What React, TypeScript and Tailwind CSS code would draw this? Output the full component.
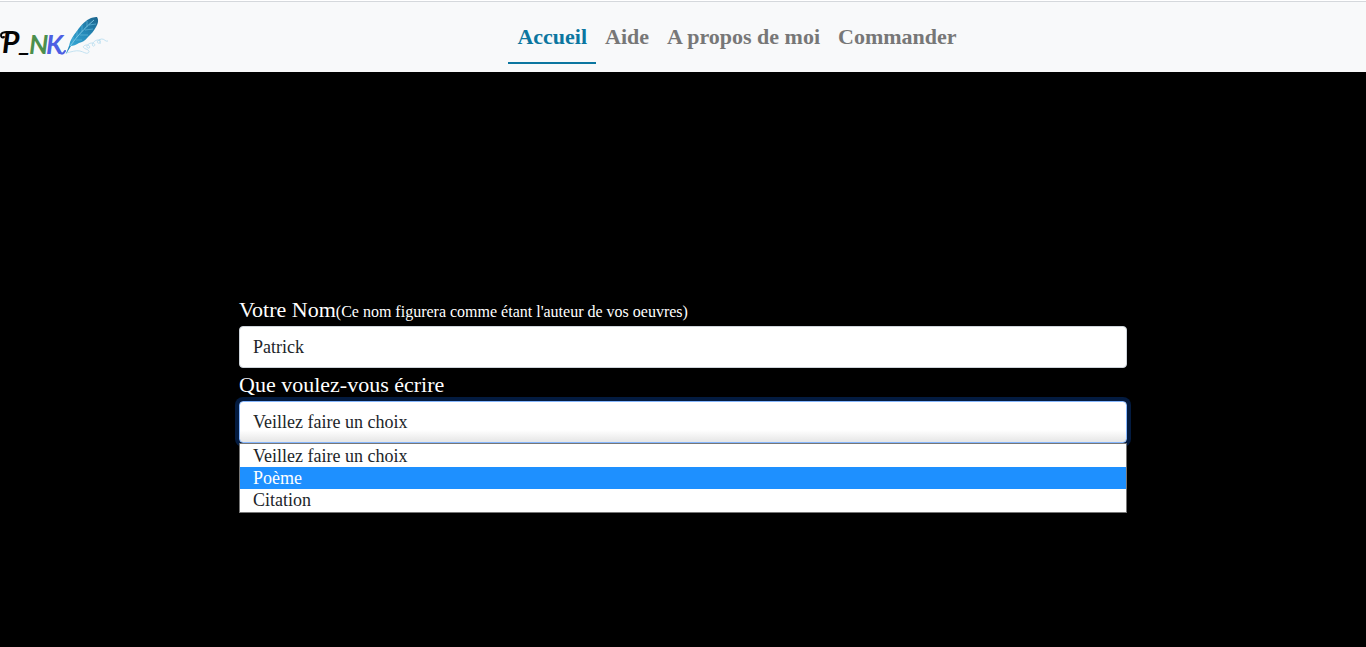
import { useState } from "react";

const links = ["Accueil", "Aide", "A propos de moi", "Commander"];
const choices = ["Veillez faire un choix", "Poème", "Citation"];

function Logo() {
  return (
    <svg width="108" height="44" viewBox="0 0 108 44" role="img" aria-label="P_NK" className="block overflow-visible">
      <defs>
        <linearGradient id="quill" x1="0" y1="1" x2="1" y2="0">
          <stop offset="0" stopColor="#39a9d6" />
          <stop offset="0.5" stopColor="#2489b8" />
          <stop offset="1" stopColor="#1c648c" />
        </linearGradient>
      </defs>
      <g fontFamily="Lato, sans-serif" fontStyle="italic" fontWeight="700">
        <text x="2" y="38" fill="#050505" fontSize="30">P</text>
        <text x="19" y="36" fill="#050505" fontSize="26">_</text>
        <text x="29" y="39" fill="#4c8f4c" fontSize="27">N</text>
        <text x="46" y="39" fill="#4d5fe3" fontSize="27">K</text>
      </g>
      <path d="M8 17C4 17 1 18 1 20s1 3 3 2" fill="none" stroke="#050505" strokeWidth="2" strokeLinecap="round" />
      <path d="M59 36c1 3 4 4 6 0" fill="none" stroke="#4d5fe3" strokeWidth="2" strokeLinecap="round" />
      <path
        d="M66 38c5-1 10-3 14-2s6 3 8 2 1-3-2-4-4-3 0-4 5 4 2 3 0-5 4-5 3 4 1 3 1-6 5-6 2 4 0 3 1-4 4-4 3 3 6 2M100 24c-1 2 1 3 0 5"
        fill="none"
        stroke="#b5dcef"
        strokeWidth="0.8"
      />
      <path d="M69 31c1-6 4-10 8-15 4-6 9-11 14-13 3-1 5-1 6-1 2 3 1 7-1 10-2 4-5 7-8 10-3 4-6 5-9 6-3 2-6 3-8 3z" fill="url(#quill)" />
      <path d="M66 38.500C70 30 79 18 94 5" fill="none" stroke="#8fd3ec" strokeWidth="0.8" />
      <path d="M73 28l0-6M77 22l0-6M82 17l0-7M87 12l0-6M76 25l6 0M80 20l8 0M85 15l8-1M89 10l7-1" stroke="#62b7da" strokeWidth="0.7" fill="none" />
      <path d="M66 39l3-8 2 0z" fill="#2489b8" />
    </svg>
  );
}

export default function App() {
  const [name, setName] = useState("Patrick");
  const [choice, setChoice] = useState(choices[0]);
  return (
    <div className="flex min-h-screen flex-col bg-black font-['Liberation_Serif',serif]">
      <header className="border-t border-white bg-[#f8f9fa]">
        <div className="flex h-[71px] items-center border-t border-[#d5d8dc]">
          <a href="#accueil" className="shrink-0">
            <Logo />
          </a>
          <nav className="flex flex-1 justify-center self-end pb-2 text-[22px] leading-[33px] font-bold">
            {links.map((link, i) => (
              <a
                key={link}
                href="#"
                aria-current={i === 0 ? "page" : undefined}
                className={
                  i === 0
                    ? "border-b-2 border-[#0b76a0] px-[9px] pt-2 pb-[9px] text-[#0b76a0]"
                    : "border-b-2 border-transparent px-[9px] pt-2 pb-[9px] text-[#777777]"
                }
              >
                {link}
              </a>
            ))}
          </nav>
        </div>
      </header>
      <main className="mx-auto w-[65%] pt-[221px]">
        <form>
          <label htmlFor="nom" className="block text-[22px] leading-[33px] text-white">
            Votre Nom<span className="text-base">(Ce nom figurera comme étant l'auteur de vos oeuvres)</span>
          </label>
          <input
            id="nom"
            type="text"
            value={name}
            onChange={(e) => setName(e.target.value)}
            className="block h-[42px] w-full rounded border border-[#ced4da] bg-white px-[13px] text-lg text-[#212529] outline-none"
          />
          <label htmlFor="choix" className="block text-[22px] leading-[33px] text-white">
            Que voulez-vous écrire
          </label>
          <div className="relative">
            <select
              id="choix"
              value={choice}
              onChange={(e) => setChoice(e.target.value)}
              className="block h-[42px] w-full appearance-none rounded border border-[#86b7fe] bg-linear-to-t from-[#e6e6e6] to-white to-30% px-[13px] text-lg text-[#212529] shadow-[0_0_0_4px_#031b40] outline-none"
            >
              {choices.map((c) => (
                <option key={c}>{c}</option>
              ))}
            </select>
            <ul
              role="listbox"
              aria-label="Que voulez-vous écrire"
              className="absolute inset-x-0 top-full border border-[#767676] bg-white py-px text-lg leading-[22px] text-[#212529]"
            >
              {choices.map((c) => (
                <li
                  key={c}
                  role="option"
                  aria-selected={c === "Poème"}
                  className={c === "Poème" ? "bg-[#1e90ff] px-[13px] text-white" : "px-[13px]"}
                >
                  {c}
                </li>
              ))}
            </ul>
          </div>
        </form>
      </main>
    </div>
  );
}
